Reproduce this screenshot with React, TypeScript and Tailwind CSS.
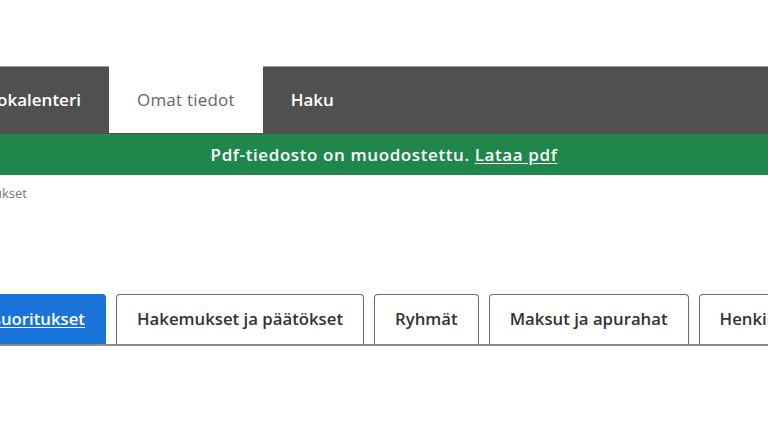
const font = { fontFamily: '"Open Sans", "Noto Sans", sans-serif' };

function NavTab({ label, active }: { label: string; active?: boolean }) {
  return (
    <div
      className={`flex items-center px-[28px] text-[17px] whitespace-nowrap ${
        active
          ? "bg-white text-[#666666] font-normal tracking-[0.2px] -mt-px h-[67px]"
          : "text-white font-semibold h-[66px]"
      }`}
    >
      {label}
    </div>
  );
}

function PageTab({ label }: { label: string }) {
  return (
    <div className="h-[50px] flex items-center px-[20px] border border-b-0 border-[#6b6b6b] rounded-t-[4px] bg-white text-[16.75px] font-semibold text-[#333333] whitespace-nowrap">
      {label}
    </div>
  );
}

export default function App() {
  return (
    <div className="w-[768px] h-[432px] bg-white overflow-hidden" style={font}>
      <div className="h-[66px]" />

      {/* main navigation, scrolled so the first items are off to the left */}
      <nav className="h-[68px] bg-[#505050] border-t border-[#9c9c9c] flex items-start">
        <div className="w-[109px] flex justify-end">
          <NavTab label="Opintokalenteri" />
        </div>
        <NavTab label="Omat tiedot" active />
        <NavTab label="Haku" />
      </nav>

      <div className="h-[41px] bg-[#1f874b] flex items-center justify-center text-[17px] font-semibold text-white tracking-[0.6px]">
        Pdf-tiedosto on muodostettu.&nbsp;
        <a href="#" className="underline underline-offset-2">
          Lataa pdf
        </a>
      </div>

      <div className="pt-[9px] w-[27px] flex justify-end whitespace-nowrap text-[13px] text-[#777777]">
        Omat tiedot / Opintosuoritukset
      </div>

      <div className="mt-[90px] flex items-end gap-[10px] border-b-2 border-[#8a8a8a]">
        <div className="w-[106px] flex justify-end shrink-0">
          <div className="h-[50px] flex items-center pl-[20px] pr-[21px] rounded-t-[4px] bg-[#1a73d9] text-[16.75px] font-semibold text-white whitespace-nowrap">
            <span className="underline underline-offset-2">Opintosuoritukset</span>
          </div>
        </div>
        <PageTab label="Hakemukset ja päätökset" />
        <PageTab label="Ryhmät" />
        <PageTab label="Maksut ja apurahat" />
        <PageTab label="Henkilötiedot" />
      </div>
    </div>
  );
}
